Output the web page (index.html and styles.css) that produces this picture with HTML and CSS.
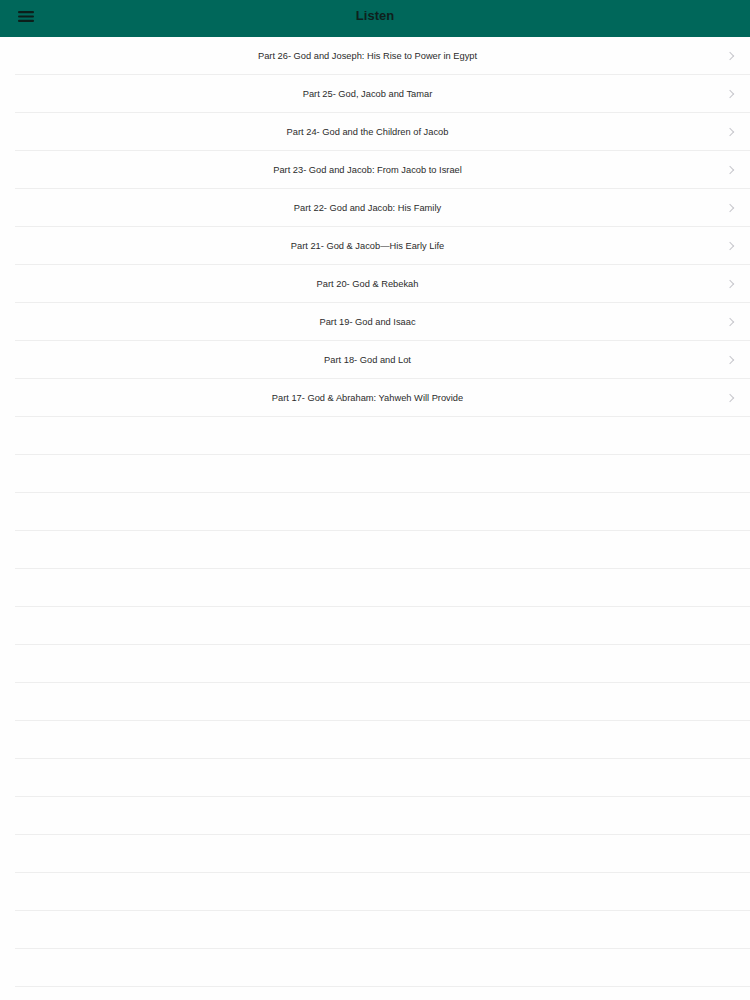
FILE: index.html
```html
<!DOCTYPE html>
<html>
<head>
<meta charset="utf-8">
<link rel="stylesheet" href="styles.css">
</head>
<body>
<header class="navbar">
  <div class="menu-btn">
    <svg width="16" height="11" viewBox="0 0 16 11"><rect x="0" y="0" width="16" height="2.2" rx="1" fill="#0c1e1a"/><rect x="0" y="4.4" width="16" height="2.2" rx="1" fill="#0c1e1a"/><rect x="0" y="8.8" width="16" height="2.2" rx="1" fill="#0c1e1a"/></svg>
  </div>
  <div class="title">Listen</div>
</header>
<ul class="list">
  <li class="row"><span class="label">Part 26- God and Joseph: His Rise to Power in Egypt</span><span class="chev"></span></li>
  <li class="row"><span class="label">Part 25- God, Jacob and Tamar</span><span class="chev"></span></li>
  <li class="row"><span class="label">Part 24- God and the Children of Jacob</span><span class="chev"></span></li>
  <li class="row"><span class="label">Part 23- God and Jacob: From Jacob to Israel</span><span class="chev"></span></li>
  <li class="row"><span class="label">Part 22- God and Jacob: His Family</span><span class="chev"></span></li>
  <li class="row"><span class="label">Part 21- God &amp; Jacob—His Early Life</span><span class="chev"></span></li>
  <li class="row"><span class="label">Part 20- God &amp; Rebekah</span><span class="chev"></span></li>
  <li class="row"><span class="label">Part 19- God and Isaac</span><span class="chev"></span></li>
  <li class="row"><span class="label">Part 18- God and Lot</span><span class="chev"></span></li>
  <li class="row"><span class="label">Part 17- God &amp; Abraham: Yahweh Will Provide</span><span class="chev"></span></li>
  <li class="row empty"></li>
  <li class="row empty"></li>
  <li class="row empty"></li>
  <li class="row empty"></li>
  <li class="row empty"></li>
  <li class="row empty"></li>
  <li class="row empty"></li>
  <li class="row empty"></li>
  <li class="row empty"></li>
  <li class="row empty"></li>
  <li class="row empty"></li>
  <li class="row empty"></li>
  <li class="row empty"></li>
  <li class="row empty"></li>
  <li class="row empty"></li>
  <li class="row empty"></li>
</ul>
</body>
</html>
```
FILE: styles.css
```css
html, body {
  margin: 0;
  padding: 0;
  background: #fefefe;
  font-family: "Liberation Sans", Arial, sans-serif;
}
.navbar {
  height: 37px;
  background: #00675a;
  display: flex;
  align-items: center;
  justify-content: center;
  position: relative;
}
.menu-btn {
  position: absolute;
  left: 18px;
  top: 11px;
  width: 16px;
  height: 11px;
  display: flex;
}
.title {
  font-size: 13px;
  font-weight: bold;
  color: #0e211d;
  margin-top: -6px;
}
.list {
  list-style: none;
  margin: 0;
  padding: 0 0 0 15px;
}
.row {
  height: 37px;
  border-bottom: 1px solid #eeeeee;
  display: flex;
  align-items: center;
  padding-right: 15px;
}
.label {
  flex: 1;
  text-align: center;
  font-size: 9.3px;
  color: #2b2b2b;
  padding-right: 7px;
}
.chev {
  width: 5px;
  height: 5px;
  border-right: 1.2px solid #c7c7cc;
  border-top: 1.2px solid #c7c7cc;
  transform: rotate(45deg);
  margin-right: 2px;
}
```
